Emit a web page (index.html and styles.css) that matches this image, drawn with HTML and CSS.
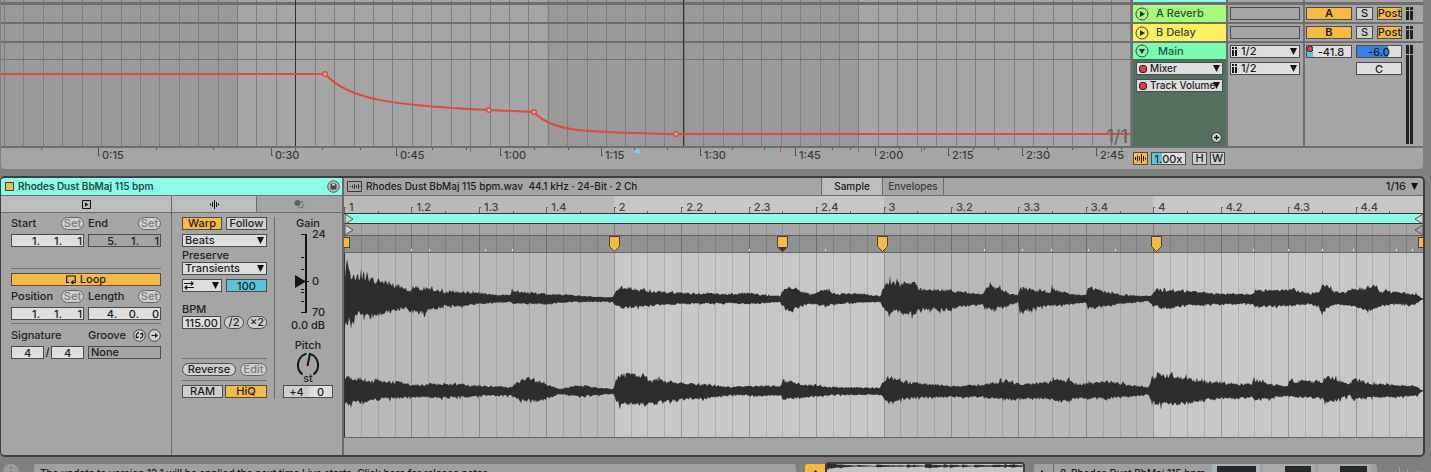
FILE: index.html
```html
<!DOCTYPE html>
<html lang="en">
<head>
<meta charset="utf-8">
<title>Rhodes Dust BbMaj 115 bpm</title>
<link rel="stylesheet" href="styles.css">
</head>
<body>
<div class="app">
  <section class="arrangement">
    <div class="tracks">
      <div class="lanes">
        <svg id="automation" class="fill" viewBox="1 0 1130 146" preserveAspectRatio="none"></svg>
        <span class="zoom-label">1/1</span>
      </div>
      <div class="column heads">
        <div class="sliver cyan"></div>
        <div class="row lime"><svg class="fold" viewBox="0 0 14 14"><circle cx="7" cy="7" r="6"/><path d="M5 4v6l5-3z"/></svg><span>A Reverb</span></div>
        <div class="row yellow"><svg class="fold" viewBox="0 0 14 14"><circle cx="7" cy="7" r="6"/><path d="M5 4v6l5-3z"/></svg><span>B Delay</span></div>
        <div class="row main-row">
          <div class="main-name"><svg class="fold" viewBox="0 0 14 14"><circle cx="7" cy="7" r="6"/><path d="M4 5h6l-3 5z"/></svg><span>Main</span></div>
          <div class="stack">
            <div class="select dot"><select aria-label="Device"><option>Mixer</option></select></div>
            <div class="select dot"><select aria-label="Parameter"><option>Track Volume</option></select></div>
          </div>
          <button class="add" aria-label="Add lane"><svg viewBox="0 0 11 11"><circle cx="5.500" cy="5.500" r="4.800"/><path d="M5.500 3v5M3 5.500h5"/></svg></button>
        </div>
      </div>
      <div class="column io">
        <div class="sliver"></div>
        <div class="row"><div class="slot"></div></div>
        <div class="row"><div class="slot"></div></div>
        <div class="row main-row">
          <div class="select bars"><select aria-label="Cue out"><option>1/2</option></select></div>
          <div class="select bars"><select aria-label="Main out"><option>1/2</option></select></div>
        </div>
      </div>
      <div class="column mix">
        <div class="sliver"></div>
        <div class="row"><button class="btn on send">A</button><button class="btn solo">S</button><button class="btn on post">Post</button><i class="meter"></i></div>
        <div class="row"><button class="btn on send">B</button><button class="btn solo">S</button><button class="btn on post">Post</button><i class="meter"></i></div>
        <div class="row main-row">
          <div class="levels">
            <input class="field volume" aria-label="Volume" value="-41.8">
            <input class="field cue" aria-label="Cue volume" value="-6.0">
            <input class="field pan" aria-label="Pan" value="C">
          </div>
          <div class="meters"><i class="meter peak"></i><i class="meter"></i></div>
        </div>
      </div>
    </div>
    <div class="footer">
      <div class="time-ruler">
        <svg id="time-ticks" class="fill" viewBox="1 148 1130 21" preserveAspectRatio="none"></svg>
        <span></span><span>0:15</span><span>0:30</span><span>0:45</span><span>1:00</span><span>1:15</span><span>1:30</span><span>1:45</span><span>2:00</span><span>2:15</span><span>2:30</span><span>2:45</span>
      </div>
      <div class="tools">
        <button class="btn on tool" aria-label="Fit waveforms"><svg viewBox="0 0 13 11"><path d="M1.500 4v3M3.500 2.500v6M5.500 3.500v4M7.500 1v9M9.500 3v5M11.500 4.500v2"/></svg></button>
        <input class="field speed" aria-label="Zoom" value="1.00x">
        <button class="btn tool">H</button>
        <button class="btn tool">W</button>
      </div>
    </div>
  </section>

  <section class="clip">
    <div class="clip-panel">
      <header class="clip-title"><i class="swatch"></i><h1>Rhodes Dust BbMaj 115 bpm</h1>
        <button class="save" aria-label="Save default clip"><svg viewBox="0 0 13 13"><circle cx="6.500" cy="6.500" r="5.800"/><path d="M3.500 3.500h5l1 1v5h-6z"/><path class="light" d="M5 4h3v1.500H5z"/></svg></button></header>
      <nav class="tabs">
        <button class="tab wide" aria-label="Launch"><svg viewBox="0 0 9 9"><path class="line" d="M.5.5h8v8h-8z"/><path d="M3 2.500v4l3.500-2z"/></svg></button>
        <button class="tab" aria-label="Audio"><svg viewBox="0 0 11 11"><path class="line" d="M1.500 4.500v2M3.500 3v5M5.500 1v9M7.500 3v5M9.500 4.500v2"/></svg></button>
        <button class="tab off" aria-label="Modulation"><svg viewBox="0 0 11 11"><circle cx="3.500" cy="4" r="3"/><circle cx="8" cy="3" r="1"/><circle cx="9.500" cy="6" r=".8"/><circle cx="8" cy="8.500" r="1"/><circle cx="5" cy="8.500" r=".8"/></svg></button>
      </nav>
      <div class="clip-body">
        <div class="box launch">
          <div class="pair">
            <div class="cell"><div class="label"><span>Start</span><button class="pill dim">Set</button></div>
              <div class="field beats"><input aria-label="Start bar" value="1."><input aria-label="Start beat" value="1."><input aria-label="Start sixteenth" value="1"></div></div>
            <div class="cell"><div class="label"><span>End</span><button class="pill dim">Set</button></div>
              <div class="field beats muted"><input aria-label="End bar" value="5."><input aria-label="End beat" value="1."><input aria-label="End sixteenth" value="1"></div></div>
          </div>
          <hr class="after-start">
          <button class="btn on loop"><svg viewBox="0 0 10 9"><path d="M3 7.500H.7V1h8.600v6.500H6.500"/><path d="M7.500 5.500l-2 2 2 1.500"/></svg>Loop</button>
          <div class="pair">
            <div class="cell"><div class="label"><span>Position</span><button class="pill dim">Set</button></div>
              <div class="field beats"><input aria-label="Position bar" value="1."><input aria-label="Position beat" value="1."><input aria-label="Position sixteenth" value="1"></div></div>
            <div class="cell"><div class="label"><span>Length</span><button class="pill dim">Set</button></div>
              <div class="field beats"><input aria-label="Length bars" value="4."><input aria-label="Length beats" value="0."><input aria-label="Length sixteenths" value="0"></div></div>
          </div>
          <hr class="after-loop">
          <div class="pair">
            <div class="cell"><div class="label"><span>Signature</span></div>
              <div class="signature"><input class="field" aria-label="Numerator" value="4"><span>/</span><input class="field" aria-label="Denominator" value="4"></div></div>
            <div class="cell"><div class="label"><span>Groove</span><span class="rounds">
              <button class="round" aria-label="Hot-swap groove"><svg viewBox="0 0 13 13"><circle cx="6.500" cy="6.500" r="5.800"/><path d="M3.500 8.500C2.500 6 4 3.800 6 3.700M9.500 4.500c1 2.500-.5 4.700-2.500 4.800M3 6.500l.7 2.200 2-.8M10 6.500l-.7-2.200-2 .8"/></svg></button>
              <button class="round" aria-label="Commit groove"><svg viewBox="0 0 13 13"><circle cx="6.500" cy="6.500" r="5.800"/><path d="M3.500 6.500h5"/><path class="solid" d="M7 4l3 2.500L7 9z"/></svg></button></span></div>
              <select class="field muted groove" aria-label="Groove"><option>None</option></select></div>
          </div>
        </div>
        <div class="box audio">
          <div class="warp">
            <div class="duo"><button class="btn on">Warp</button><button class="btn">Follow</button></div>
            <div class="select"><select aria-label="Warp mode"><option>Beats</option></select></div>
            <label class="caption" for="preserve">Preserve</label>
            <div class="select"><select id="preserve"><option>Transients</option></select></div>
            <div class="duo low"><div class="select swap"><svg viewBox="0 0 10 9"><path d="M0 2.500h9M7 .5l2 2-2 2M10 6.500H1M3 4.500l-2 2 2 2"/></svg><select aria-label="Transient loop mode"><option></option></select></div><input class="field teal" aria-label="Envelope" value="100"></div>
            <label class="caption bpm" for="bpm">BPM</label>
            <div class="tempo"><input id="bpm" class="field" value="115.00"><button class="pill">/2</button><button class="pill">×2</button></div>
            <hr class="before-reverse">
            <div class="reverse"><button class="pill">Reverse</button><button class="pill dim">Edit</button></div>
            <hr class="before-ram">
            <div class="duo quality"><button class="btn">RAM</button><button class="btn on">HiQ</button></div>
          </div>
          <div class="gain">
            <label for="gain">Gain</label>
            <div class="fader"><svg viewBox="0 0 36 82"><path class="bar" d="M21 2v79"/><path d="M16 2.500h5M16 25.500h3M16 37.500h3M16 57.500h3M16 60.500h3M16 69.500h3M16 80.500h5M20 49.500h4"/><path class="thumb" d="M10 43v13l11-6.500z"/></svg>
              <div class="scale"><span>24</span><span>0</span><span>70</span></div>
              <input id="gain" type="range" min="-70" max="24" value="0"></div>
            <output>0.0 dB</output>
            <label class="pitch-label" for="pitch">Pitch</label>
            <div class="knob"><svg viewBox="0 0 28 28"><path d="M8.500 23.500A12 12 0 0 1 12.500 2.600M15.500 2.600A12 12 0 0 1 19.500 23.500"/><path class="mark" d="M14 1v3"/><path d="M13.500 15L16 2.500"/></svg><input id="pitch" type="range" min="-48" max="48" value="4"><span>st</span></div>
            <div class="field transpose"><input aria-label="Semitones" value="+4"><input aria-label="Cents" value="0"></div>
          </div>
        </div>
      </div>
    </div>

    <div class="sample">
      <header class="sample-head">
        <div class="file"><svg viewBox="0 0 15 11"><path d="M.5.5h14v10H.5z"/><path d="M3.500 5v1M5.500 4v3M7.500 3v5M9.500 4v3M11.500 3v5M13 5v1"/></svg><span>Rhodes Dust BbMaj 115 bpm.wav&nbsp; 44.1 kHz · 24-Bit · 2 Ch</span></div>
        <button class="view active">Sample</button><button class="view">Envelopes</button>
        <div class="grid-size"><span>1/16</span><i></i></div>
      </header>
      <div class="stage">
        <svg id="wave" class="fill" viewBox="344 196 1079 242" preserveAspectRatio="none"></svg>
        <div class="beat-labels"><span>1</span><span>1.2</span><span>1.3</span><span>1.4</span><span>2</span><span>2.2</span><span>2.3</span><span>2.4</span><span>3</span><span>3.2</span><span>3.3</span><span>3.4</span><span>4</span><span>4.2</span><span>4.3</span><span>4.4</span></div>
      </div>
    </div>
  </section>

  <footer class="status">
    <svg class="info" viewBox="0 0 16 16"><circle cx="8" cy="8" r="8"/><path d="M8 3v2M8 7v6"/></svg>
    <p class="message">The update to version 12.1 will be applied the next time Live starts. Click here for release notes.</p>
    <button class="warn" aria-label="Show clip view"><svg viewBox="0 0 9 9"><path d="M4.500 0L9 6H0z"/></svg></button>
    <div class="overview"><svg id="mini" viewBox="0 0 196 14" preserveAspectRatio="none"></svg></div>
    <button class="play" aria-label="Show device view"><svg viewBox="0 0 9 9"><path d="M2 0l6 4.500L2 9z"/></svg></button>
    <div class="track-tab"><span>8-Rhodes Dust BbMaj 115 bpm</span>
      <i class="device big"></i><i class="device"></i><i class="device"></i></div>
    <svg class="levels-icon" viewBox="0 0 28 16"><path d="M1.500 5v11M5.500 1v15M9.500 5v11M13.500 3v13M21 6h6"/></svg>
  </footer>
</div>
<script src="script.js"></script>
</body>
</html>
```
FILE: styles.css
```css
* { box-sizing: border-box; }
body { margin: 0; background: #7f7f7f; color: #1c1c1c; font: 500 11px/13px Inter, "Liberation Sans", sans-serif; }
button, input, select { font: inherit; color: inherit; margin: 0; padding: 0; border-radius: 0; min-width: 0; }
button { cursor: pointer; display: flex; align-items: center; justify-content: center; }
svg { display: block; flex: none; }
h1, p { margin: 0; font: inherit; }
.app { height: 100vh; display: flex; flex-direction: column; overflow: hidden; }
.fill { position: absolute; inset: 0; width: 100%; height: 100%; }

.field, .btn, .select { height: 13px; border: 1px solid #4c4c4c; background: #dedede; line-height: 11px; }
.btn { background: #cfcfcf; }
.btn.on { background: #f6ba42; }
input { border: 0; background: none; text-align: center; outline: 0; }
.muted { background: #a5a5a5; }
.select { position: relative; display: flex; }
.select select { appearance: none; border: 0; background: none; width: 100%; height: 11px; padding-left: 2px; line-height: 11px; }
.select::after { content: ""; position: absolute; right: 2px; top: 2px; width: 7px; height: 7px; background: #111; clip-path: polygon(0 0, 100% 0, 50% 100%); pointer-events: none; }
.pill { height: 13px; border: 1px solid #4c4c4c; border-radius: 7px; background: #cfcfcf; line-height: 11px; }
.dim { color: #7b7b7b; border-color: #666; }
hr { border: 0; border-top: 1px solid #737373; margin: 0; width: 100%; }

.arrangement { flex: none; margin: 0 8px 0 1px; background: #a5a5a5; border-radius: 0 0 4px 4px; }
.tracks { display: flex; border-bottom: 2px solid #6e6e6e; }
.lanes { flex: 1; position: relative; overflow: hidden; }
.zoom-label { position: absolute; right: 3px; bottom: 0; font-size: 18px; line-height: 18px; color: #656565; }
.column { flex: none; border-left: 2px solid #6e6e6e; }
.heads { width: 95px; }
.io { width: 77px; }
.mix { width: 120px; }
.sliver { height: 5px; border-bottom: 3px solid #6e6e6e; }
.cyan { background: #8cfde8; }
.row { height: 19px; border-bottom: 2px solid #6e6e6e; padding: 2px; display: flex; }
.main-row { height: 103px; border: 0; position: relative; }
.heads .row { align-items: center; gap: 7px; color: #2e4a2c; }
.lime { background: #a6fb7d; }
.yellow { background: #fff062; }
.heads .main-row { flex-direction: column; align-items: stretch; padding: 0; gap: 2px; background: #53705f; color: #1c1c1c; }
.main-name { height: 17px; background: #7afcb1; border-bottom: 1px solid #3f6b55; display: flex; align-items: center; gap: 9px; padding: 0 2px; color: #21563c; }
.fold { width: 14px; height: 14px; }
.fold circle { fill: none; stroke: #334b2c; }
.fold path { fill: #202c1c; }
.stack { display: grid; gap: 4px; padding: 0 3px; font-size: 10px; }
.select.dot::before { content: ""; flex: none; width: 6px; height: 6px; margin: 2px 0 0 2px; border-radius: 3px; background: #d9453d; border: 1px solid #2b2020; }
.select.dot select { padding-left: 3px; }
.add { position: absolute; right: 4px; bottom: 3px; width: 11px; height: 11px; border: 0; background: none; }
.add svg { width: 11px; height: 11px; }
.add circle { fill: #d5d5d5; stroke: #303030; }
.add path { stroke: #111; stroke-width: 1.300; }
.io .row { padding: 2px; }
.slot { height: 13px; width: 70px; border: 1px solid #4c4c4c; }
.io .main-row { flex-direction: column; gap: 4px; }
.io .select { width: 70px; }
.bars::before { content: ""; flex: none; width: 5px; height: 9px; margin: 1px 2px 0 1px; background: linear-gradient(90deg, #111 2px, transparent 2px 3px, #111 3px); -webkit-mask: linear-gradient(#000 2px, transparent 2px 3px, #000 3px); mask: linear-gradient(#000 2px, transparent 2px 3px, #000 3px); }
.mix .row { padding: 2px 10px 2px 1px; }
.send { width: 46px; font-weight: 600; margin-right: 4px; }
.solo { width: 17px; margin-right: 4px; }
.post { width: 25px; margin-right: 4px; }
.meter { display: block; width: 7px; height: 13px; background: linear-gradient(90deg, #222 3px, transparent 3px 4px, #222 4px); -webkit-mask: linear-gradient(#000 3px, transparent 3px 4px, #000 4px); mask: linear-gradient(#000 3px, transparent 3px 4px, #000 4px); }
.levels { display: grid; grid-template-columns: 46px 46px; gap: 4px; align-content: start; margin-right: 4px; }
.volume { padding-left: 4px; background: radial-gradient(circle at 3px 3px, #d9453d 2px, #222 3px, transparent 3px), linear-gradient(90deg, #5cc4d8 6px, #dedede 6px); }
.cue { background: linear-gradient(90deg, #3680ea 31px, #dedede 31px); }
.pan { grid-column: 2; }
.levels .field { width: 100%; }
.meters { display: grid; grid-template-rows: 10px 89px; }
.meters .meter { height: auto; -webkit-mask: none; mask: none; }
.meters .peak { border-bottom: 1px solid #a5a5a5; }
.footer { display: flex; height: 21px; }
.time-ruler { flex: 1; position: relative; display: grid; grid-template-columns: 97fr 173fr 125fr 104fr 101fr 99fr 95fr 80fr 73fr 74fr 74fr 35fr; }
.time-ruler span { position: relative; padding: 1px 0 0 4px; min-width: 0; white-space: nowrap; color: #3a3a3a; }
.tools { flex: none; width: 292px; padding: 4px 2px; display: flex; }
.tool { width: 15px; margin-right: 3px; }
.tool svg { width: 13px; height: 11px; }
.tool path { stroke: #111; }
.speed { width: 35px; margin-right: 6px; background: linear-gradient(90deg, #5cc4d8 10px, #dedede 10px); }

.clip { flex: none; margin: 7px 6px 0 0; border: 2px solid #3f3f3f; border-left-width: 1px; border-radius: 5px; background: #a5a5a5; display: flex; overflow: hidden; }
.clip-panel { flex: none; width: 343px; border-right: 2px solid #6b6b6b; display: flex; flex-direction: column; }
.clip-title { height: 18px; background: #8cfde8; border-bottom: 1px solid #6b6b6b; display: flex; align-items: center; padding: 0 2px 0 4px; color: #1d4a42; }
.clip-title h1 { flex: 1; font-size: 10px; font-weight: 600; }
.swatch { width: 9px; height: 9px; border: 1px solid #4b4331; background: #f6ba42; margin-right: 4px; }
.save, .round { border: 0; background: none; width: 13px; height: 13px; }
.save svg, .round svg { width: 13px; height: 13px; }
.save circle { fill: #bbb; stroke: #555; }
.save path { fill: #4a4a4a; }
.save .light { fill: #ccc; }
.tabs { height: 17px; display: flex; border-bottom: 1px solid #6b6b6b; }
.tab { border: 0; background: #bdbdbd; width: 84px; }
.tab.wide { width: 171px; border-right: 1px solid #6b6b6b; }
.tab.off { flex: 1; background: #a5a5a5; border-left: 1px solid #6b6b6b; }
.tab svg { width: 11px; height: 11px; fill: #111; }
.tab.wide svg { width: 9px; height: 9px; }
.tab .line { fill: none; stroke: #111; }
.tab.off svg { fill: #606060; }
.clip-body { display: flex; flex: 1; }
.launch { width: 171px; border-right: 1px solid #6b6b6b; padding: 4px 10px; }
.pair { display: grid; grid-template-columns: 1fr 1fr; gap: 4px; }
.label { display: flex; justify-content: space-between; align-items: center; height: 13px; margin-bottom: 4px; color: #222; }
.label .pill { width: 23px; }
.beats { display: grid; grid-template-columns: 29px 22px 20px; }
.beats input { text-align: right; height: 11px; padding-right: 1px; width: 100%; }
.after-start { margin: 21px 0 4px; }
.loop { width: 100%; gap: 4px; margin-bottom: 4px; }
.loop svg { width: 10px; height: 9px; }
.loop path, .swap path { fill: none; stroke: #111; stroke-width: 1.200; }
.after-loop { margin: 3px 0 5px; }
.signature { display: flex; justify-content: space-between; }
.signature .field { width: 33px; }
.groove { appearance: none; width: 100%; padding-left: 2px; display: block; }
.rounds { display: flex; gap: 2px; }
.round circle { fill: #cfcfcf; stroke: #444; }
.round path { fill: none; stroke: #111; stroke-width: 1.200; }
.round .solid { fill: #111; stroke: none; }
.audio { flex: 1; display: flex; padding: 4px 0 0 10px; }
.warp { width: 93px; padding-right: 7px; border-right: 1px solid #6b6b6b; height: 182px; }
.duo { display: grid; grid-template-columns: 40px 1fr; gap: 4px; margin-bottom: 4px; }
.duo .field { width: 100%; }
.low { margin-top: 4px; }
.caption { display: block; height: 13px; margin: 2px 0 0; color: #222; }
.bpm { margin-top: 11px; }
.teal { background: #5cc4d8; }
.swap svg { width: 10px; height: 9px; margin: 1px; }
.swap select { position: absolute; inset: 0; }
.tempo { display: grid; grid-template-columns: 39px 20px 20px; justify-content: space-between; }
.tempo .field { width: 100%; }
.before-reverse { margin: 29px 0 4px; }
.reverse { display: grid; grid-template-columns: 54px 27px; justify-content: space-between; }
.before-ram { margin: 4px 0; }
.quality { grid-template-columns: 41px 1fr; gap: 2px; }
.gain { flex: 1; display: flex; flex-direction: column; align-items: center; padding-right: 4px; color: #222; }
.fader { position: relative; display: flex; width: 66px; padding-left: 10px; height: 88px; }
.fader svg { width: 36px; height: 82px; margin-top: 2px; }
.fader path, .knob path { stroke: #151515; fill: none; }
.fader .bar { stroke-width: 2; }
.fader .thumb { fill: #151515; stroke: none; }
.scale { display: grid; grid-template-rows: 47px 31px 13px; margin: -2px 0 0 -9px; }
.fader input, .knob input { position: absolute; inset: 0; width: 100%; height: 100%; opacity: 0; }
.gain output { margin-top: 1px; }
.pitch-label { margin-top: 7px; }
.knob { position: relative; height: 33px; display: flex; flex-direction: column; align-items: center; }
.knob svg { width: 28px; height: 28px; margin-top: -1px; }
.knob path { stroke-width: 2; }
.knob .mark { stroke: #5cc4d8; }
.knob span { margin-top: -7px; }
.transpose { width: 50px; display: grid; grid-template-columns: 25px 1fr; background: linear-gradient(90deg, #cfcfcf 25px, #dedede 25px); }
.transpose input { width: 100%; height: 11px; }

.sample { flex: 1; min-width: 0; display: flex; flex-direction: column; padding-bottom: 17px; }
.sample-head { height: 18px; display: flex; border-bottom: 1px solid #6b6b6b; align-items: stretch; font-size: 10px; }
.file { width: 477px; display: flex; align-items: center; gap: 4px; padding-left: 3px; white-space: nowrap; }
.file svg { width: 15px; height: 11px; }
.file path { fill: none; stroke: #3a3a3a; }
.view { border: 0; border-right: 1px solid #6b6b6b; background: #a5a5a5; color: #3a3a3a; width: 61px; }
.view.active { background: #bdbdbd; color: #1c1c1c; border-left: 1px solid #6b6b6b; width: 62px; }
.grid-size { margin-left: auto; display: flex; align-items: center; gap: 5px; padding-right: 5px; font-size: 11px; }
.grid-size i { width: 7px; height: 7px; background: #111; clip-path: polygon(0 0, 100% 0, 50% 100%); }
.stage { position: relative; height: 242px; }
.beat-labels { position: relative; display: grid; grid-template-columns: repeat(16, minmax(0, 1fr)); padding-top: 5px; color: #444; }
.beat-labels span { padding-left: 5px; }

.status { flex: none; height: 24px; margin-top: 7px; display: flex; align-items: flex-start; color: #181818; white-space: nowrap; font-size: 10px; }
.status .info { width: 16px; height: 16px; margin: 0 15px 0 3px; fill: #999; stroke: #777; stroke-width: 2; }
.info circle { stroke: none; }
.message { flex: 1; height: 20px; padding: 3px 6px; background: #a0a0a0; border-radius: 3px; }
.warn { width: 20px; height: 20px; border: 0; border-radius: 3px 0 0 0; background: #f6ba42; margin-left: 9px; }
.warn svg, .play svg { width: 9px; height: 9px; fill: #111; }
.overview { width: 200px; height: 20px; margin-top: -2px; border: 2px solid #3f3f3f; border-radius: 4px; background: #c4c4c4; }
.overview svg { width: 196px; height: 14px; }
.play { width: 20px; height: 20px; margin-left: 9px; border: 0; border-right: 1px solid #6b6b6b; border-radius: 3px 0 0 0; background: #a0a0a0; }
.track-tab { width: 323px; height: 20px; background: #a0a0a0; padding: 3px 6px; display: flex; gap: 3px; border-radius: 0 3px 0 0; }
.track-tab span { width: 151px; }
.device { width: 53px; height: 18px; margin-top: -3px; border: 1px solid #aaa; border-width: 2px 4px 0 22px; background: #25292a; }
.device.big { width: 48px; border-left-width: 5px; border-color: #a8b4ba; }
.levels-icon { width: 28px; height: 16px; margin: 2px 9px 0 17px; stroke: #9b9b9b; fill: none; }
```
FILE: script.js
```js
const NS = 'http://www.w3.org/2000/svg';

function add(svg, tag, attrs) {
  const el = document.createElementNS(NS, tag);
  for (const key in attrs) el.setAttribute(key, attrs[key]);
  svg.appendChild(el);
}

function box(svg, x, y, width, height, fill) {
  add(svg, 'rect', { x, y, width, height, fill, 'shape-rendering': 'crispEdges' });
}

function drawAutomation(svg) {
  box(svg, 1, 0, 236, 146, '#999');
  box(svg, 547, 0, 312, 146, '#999');
  for (let i = 0; i < 59; i++) box(svg, Math.round(4 + i * 19.42), 0, 1, 146, '#7c7c7c');
  box(svg, 1, 2, 1130, 3, '#6e6e6e');
  box(svg, 1, 22, 1130, 2, '#6e6e6e');
  box(svg, 1, 41, 1130, 2, '#6e6e6e');
  box(svg, 1, 59, 1130, 1, '#747474');
  box(svg, 295, 0, 1, 146, '#2e2e2e');
  box(svg, 683, 0, 1, 146, '#2e2e2e');
  add(svg, 'path', {
    d: 'M1 74H325C350 102 400 105 489 110L534 112C553 134 596 132 676 134H1131',
    fill: 'none', stroke: '#dc4a42', 'stroke-width': 2
  });
  for (const [cx, cy] of [[325, 74], [489, 110], [534, 112], [676, 134]])
    add(svg, 'circle', { cx, cy, r: 2.3, fill: '#c9b5b3', stroke: '#dc4a42', 'stroke-width': 1.4 });
}

function drawTimeTicks(svg) {
  for (const x of [98, 271, 396, 500, 601, 700, 795, 875, 948, 1022, 1096]) {
    box(svg, x, 148, 1, 8, '#555');
    box(svg, x, 155, 2, 1, '#555');
  }
  for (const x of [41, 156, 213, 322, 360, 432, 466, 534, 568, 634, 667, 732, 764, 832, 850, 899, 924, 973, 998, 1047, 1072, 1121])
    box(svg, x, 148, 1, 2, '#555');
  for (const x of [295, 470, 780, 858, 921]) box(svg, x, 148, 1, 4, '#dc4a42');
  add(svg, 'path', { d: 'M634 153l3.500-4 3.500 4z', fill: '#5ce1f5' });
}

// Envelope points: x, height above the centre line, depth below it.
const left = [[345,28,26],[348,31,29],[349,27,20],[352,24,26],[355,24,15],[362,23,15],[368,21,19],[380,18,16],[390,16,13],[402,12,10],[410,8,11],[412,9,13],[413,14,14],[420,11,14],[432,10,11],[445,7,7],[460,7,7],[480,6,5],[495,4,4],[510,4,3],[512,9,5],[530,6,5],[550,5,5],[570,4,3],[600,2,3],[613,2,3],[616,9,7],[622,12,9],[640,9,8],[660,7,6],[690,6,5],[730,5,4],[750,6,5],[765,4,4],[780,3,3],[783,9,7],[790,12,14],[800,8,8],[810,5,5],[826,10,7],[835,5,5],[855,6,4],[880,3,3],[884,12,10],[889,17,14],[900,15,12],[905,16,18],[916,17,14],[918,10,11],[948,9,11],[960,7,8],[983,5,6],[986,12,10],[990,14,11],[1000,10,9],[1010,5,6],[1018,4,3],[1020,11,13],[1030,10,11],[1050,6,6],[1052,11,7],[1070,5,5],[1086,4,4],[1088,12,10],[1100,9,8],[1120,4,5],[1148,3,2],[1153,5,6],[1157,11,8],[1165,8,10],[1185,8,7],[1210,6,6],[1240,5,5],[1253,5,5],[1255,9,8],[1280,8,7],[1289,10,7],[1300,8,6],[1310,5,5],[1318,7,8],[1322,13,15],[1327,13,10],[1335,7,6],[1345,7,6],[1353,12,8],[1360,10,9],[1372,13,12],[1377,13,9],[1380,8,8],[1395,7,5],[1410,5,6],[1417,5,5],[1421,1,1],[1423,0.5,0.5]];
const right = [[345,15,14],[355,13,12],[375,10,9],[400,9,7],[412,6,6],[440,7,7],[465,6,6],[480,5,5],[510,4,5],[520,10,9],[530,13,10],[538,10,11],[548,6,7],[560,2,3],[580,6,6],[600,3,4],[613,2,3],[616,12,10],[620,16,14],[632,17,14],[645,15,14],[650,9,12],[655,13,13],[665,10,11],[690,8,8],[700,7,8],[712,6,7],[730,4,4],[760,5,5],[781,5,4],[783,11,9],[800,7,7],[830,4,4],[880,3,4],[884,10,8],[888,15,11],[900,10,9],[920,8,7],[950,5,6],[980,6,6],[1005,10,9],[1020,7,8],[1045,9,8],[1052,9,8],[1053,14,10],[1068,11,11],[1075,7,8],[1095,8,7],[1110,10,8],[1130,6,6],[1148,4,4],[1152,12,11],[1158,17,14],[1175,15,13],[1195,11,12],[1210,9,8],[1235,7,7],[1252,7,7],[1254,12,9],[1270,7,7],[1288,5,5],[1289,10,6],[1310,10,7],[1322,10,8],[1325,15,13],[1335,12,10],[1350,7,5],[1353,13,9],[1370,8,7],[1395,6,6],[1417,5,5],[1421,1,1],[1423,0.5,0.5]];

function envelope(points, x, side) {
  let i = 1;
  while (i < points.length - 1 && points[i][0] < x) i++;
  const a = points[i - 1], b = points[i];
  const t = Math.max(0, Math.min(1, (x - a[0]) / (b[0] - a[0])));
  return a[side] + (b[side] - a[side]) * t;
}

function wavePath(points, centre, seed) {
  const random = () => (seed = (seed * 16807) % 2147483647) / 2147483647;
  const edge = side => {
    const out = [];
    for (let x = 345; x <= 1423; x++) {
      const amount = envelope(points, x, side) * (0.76 + 0.38 * random() + (random() > 0.9 ? 0.25 : 0));
      out.push([x, centre + (side === 1 ? -amount : amount)]);
    }
    return out;
  };
  const outline = edge(1).concat(edge(2).reverse());
  return 'M' + outline.map(p => p[0] + ' ' + p[1].toFixed(1)).join('L') + 'Z';
}

function drawSample(svg) {
  ['#b9b9b9', '#c7c7c7', '#b9b9b9', '#c7c7c7'].forEach((c, i) => box(svg, [344, 614, 884, 1153][i], 196, 270, 242, c));
  box(svg, 344, 224, 1079, 12, '#a5a5a5');
  box(svg, 344, 236, 1079, 16, '#919191');
  for (let i = 0; i < 64; i++) {
    const x = Math.round(344 + i * 16.86);
    box(svg, x, 224, 1, 213, i % 4 ? 'rgba(0,0,0,.12)' : 'rgba(0,0,0,.24)');
    if (i % 4 === 0) {
      box(svg, x, 207, 1, 6, '#666');
      box(svg, x, 207, 2, 1, '#666');
    } else if (i % 4 === 2) box(svg, x, 211, 1, 2, '#666');
  }
  box(svg, 344, 213, 1079, 11, '#333');
  box(svg, 344, 214, 1079, 9, '#8cfde8');
  box(svg, 344, 235, 1079, 1, '#606060');
  box(svg, 344, 252, 1079, 1, '#686868');
  box(svg, 344, 437, 1079, 1, '#666');
  for (const x of [411, 429, 485, 512, 749, 825, 984, 1022, 1051, 1088, 1115, 1253, 1288, 1322, 1353, 1396, 1412])
    box(svg, x, 249, 1, 2, '#eee');
  for (const y of [214, 225]) {
    add(svg, 'path', { d: `M345 ${y}l8 5-8 5z`, fill: '#d0d0d0', stroke: '#555' });
    add(svg, 'path', { d: `M1423 ${y}l-8 5 8 5z`, fill: y === 214 ? '#d0d0d0' : '#a5a5a5', stroke: '#555' });
  }
  box(svg, 344, 237, 6, 11, '#444');
  box(svg, 344, 238, 5, 9, '#f6ba42');
  box(svg, 1418, 237, 5, 11, '#444');
  box(svg, 1419, 238, 4, 9, '#f6ba42');
  for (const x of [614.5, 782.5, 882.5, 1156.5])
    add(svg, 'path', { d: `M${x - 5} 236.500h10v10l-5 5-5-5z`, fill: '#f6ba42', stroke: '#4b4331' });
  add(svg, 'path', { d: 'M777 247h11l-5.500 5z', fill: '#3d3d3d' });
  box(svg, 344, 253, 1, 184, '#333');
  add(svg, 'path', { d: wavePath(left, 299, 41), fill: '#2d2d2d' });
  add(svg, 'path', { d: wavePath(right, 391, 97), fill: '#2d2d2d' });
}

drawAutomation(document.getElementById('automation'));
drawTimeTicks(document.getElementById('time-ticks'));
drawSample(document.getElementById('wave'));
add(document.getElementById('mini'), 'path', { d: wavePath(left, 299, 41), fill: '#2d2d2d', transform: 'translate(-62.700 -39.800) scale(.182 .14)' });
```
